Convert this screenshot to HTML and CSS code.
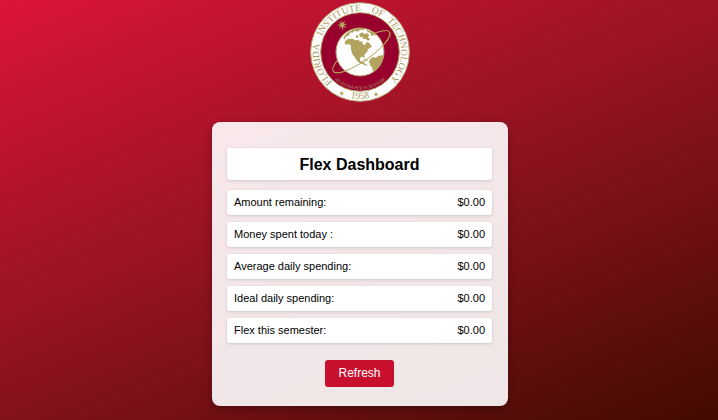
FILE: index.html
```html
<!DOCTYPE html>
<html lang="en">
<head>
  <meta charset="utf-8">
  <meta name="viewport" content="width=device-width, initial-scale=1">
  <title>Flex Dashboard</title>
  <link rel="stylesheet" href="styles.css">
</head>
<body>
  <header class="header">
    <svg class="seal" viewBox="30 7 300 300" role="img" aria-label="Florida Institute of Technology seal">
      <defs>
        <path id="name-arc" d="M118.500 263.500A123 123 0 1 1 241.500 263.500"/>
        <path id="motto-arc" d="M80 209A113 113 0 0 0 280 209"/>
        <path id="year-arc" d="M92 267A142 142 0 0 0 268 267"/>
        <path id="star" d="M0-8 2-2.500H8L3 1 5 7 0 3.500-5 7-3 1-8-2.500H-2Z"/>
        <clipPath id="globe-clip"><circle cx="180" cy="157" r="72"/></clipPath>
      </defs>
      <circle class="ring" cx="180" cy="157" r="148"/>
      <circle class="field" cx="180" cy="157" r="118"/>
      <ellipse class="orbit" cx="184" cy="156" rx="103" ry="28" transform="rotate(-35 184 156)"/>
      <circle class="globe" cx="180" cy="157" r="72"/>
      <g class="land" clip-path="url(#globe-clip)">
        <path d="M130 113 141 100 158 90 180 84 200 86 190 91 180 90 174 96 164 93 157 100 151 98 146 108 139 110 133 120Z"/>
        <path d="M134 127 143 118 158 117 166 122 175 120 180 126 188 124 187 132 195 137 199 127 208 130 216 141 207 146 202 151 204 155 197 160 193 168 195 177 190 171 181 173 180 183 188 187 193 182 191 190 198 193 203 199 192 195 180 190 171 184 164 172 158 165 153 151 153 139 146 132 137 136Z"/>
        <path d="M177 104 187 98 193 103 202 101 208 107 203 113 211 118 205 123 195 117 187 118 190 111 181 113Z"/>
        <path d="M167 109 174 106 176 113 169 116ZM201 91 219 97 231 108 222 106 214 109 211 100 202 97ZM188 179 199 180 205 183 197 183Z"/>
        <path d="M209 180 218 172 228 174 235 168 250 167 252 180 239 201 226 217 219 217 217 205 211 197 207 187Z"/>
      </g>
      <path class="orbit" d="M268.400 96.900A103 28-35 0 1 99.600 215.100"/>
      <path class="land" d="m125 59 2 10 9-6-5 9 11 1-10 4 8 9-10-5-1 13-4-12-9 6 6-9-12-3 12-2-6-9 9 5Z"/>
      <g class="lettering">
        <text class="name"><textPath href="#name-arc" startOffset="14%">FLORIDA</textPath></text>
        <text class="name"><textPath href="#name-arc" startOffset="39%">INSTITUTE</textPath></text>
        <text class="name"><textPath href="#name-arc" startOffset="58%">OF</textPath></text>
        <text class="name"><textPath href="#name-arc" startOffset="79%">TECHNOLOGY</textPath></text>
        <text class="motto"><textPath href="#motto-arc" startOffset="50%">AD ASTRA PER SCIENTIAM</textPath></text>
        <text class="year"><textPath href="#year-arc" startOffset="50%">1958</textPath></text>
      </g>
      <use class="land" href="#star" x="125" y="281"/>
      <use class="land" href="#star" x="228" y="284"/>
    </svg>
  </header>
  <main class="card">
    <h1 class="tile title">Flex Dashboard</h1>
    <dl class="stats">
      <div class="tile stat"><dt>Amount remaining:</dt><dd>$0.00</dd></div>
      <div class="tile stat"><dt>Money spent today :</dt><dd>$0.00</dd></div>
      <div class="tile stat"><dt>Average daily spending:</dt><dd>$0.00</dd></div>
      <div class="tile stat"><dt>Ideal daily spending:</dt><dd>$0.00</dd></div>
      <div class="tile stat"><dt>Flex this semester:</dt><dd>$0.00</dd></div>
    </dl>
    <button class="refresh" type="button">Refresh</button>
  </main>
</body>
</html>
```

FILE: styles.css
```css
* {
  box-sizing: border-box;
}

body {
  display: flex;
  flex-direction: column;
  align-items: center;
  gap: 20px;
  min-height: 100vh;
  margin: 0;
  padding: 2px 0 14px 2px;
  background: linear-gradient(157deg, #dc143c, #901320 50%, #420b02);
  color: #000;
  font-family: "Liberation Sans", Arial, sans-serif;
  font-size: 11px;
}

.header {
  display: flex;
}

.seal {
  width: 100px;
  height: 100px;
}

.ring {
  fill: #fff;
  stroke: #b3a369;
  stroke-width: 3;
}

.field {
  fill: #98002e;
  stroke: #b3a369;
  stroke-width: 3;
}

.globe {
  fill: #fff;
  stroke: #b3a369;
  stroke-width: 3;
}

.land {
  fill: #b3a35f;
}

.orbit {
  fill: none;
  stroke: #b3a05a;
  stroke-width: 3;
}

.lettering {
  fill: #a8975a;
  font-family: "Liberation Serif", "Times New Roman", serif;
  text-anchor: middle;
  text-rendering: geometricPrecision;
}

.name {
  font-size: 29px;
}

.motto {
  font-size: 14px;
  font-style: italic;
}

.year {
  font-size: 29px;
}

.card {
  display: flex;
  flex-direction: column;
  width: 100%;
  max-width: 296px;
  padding: 26px 16px 19px 15px;
  border-radius: 8px;
  background: rgba(255, 255, 255, 0.9);
  box-shadow: 0 3px 8px rgba(0, 0, 0, 0.3);
}

.tile {
  border-radius: 3px;
  background: #fff;
  box-shadow: 0 1px 3px rgba(0, 0, 0, 0.15);
}

.title {
  margin: 0 0 10px;
  padding: 7px 6px 5px;
  font-size: 16px;
  line-height: 20px;
  text-align: center;
}

.stats {
  display: grid;
  gap: 7px;
  margin: 0 0 17px;
}

.stat {
  display: flex;
  justify-content: space-between;
  padding: 6px 7px;
  line-height: 13px;
}

.stat dd {
  margin: 0;
}

.refresh {
  align-self: center;
  padding: 6px 13px;
  border: 0;
  border-radius: 3px;
  background: #c8102e;
  color: #fff;
  font-family: inherit;
  font-size: 12px;
  line-height: 15px;
}
```
